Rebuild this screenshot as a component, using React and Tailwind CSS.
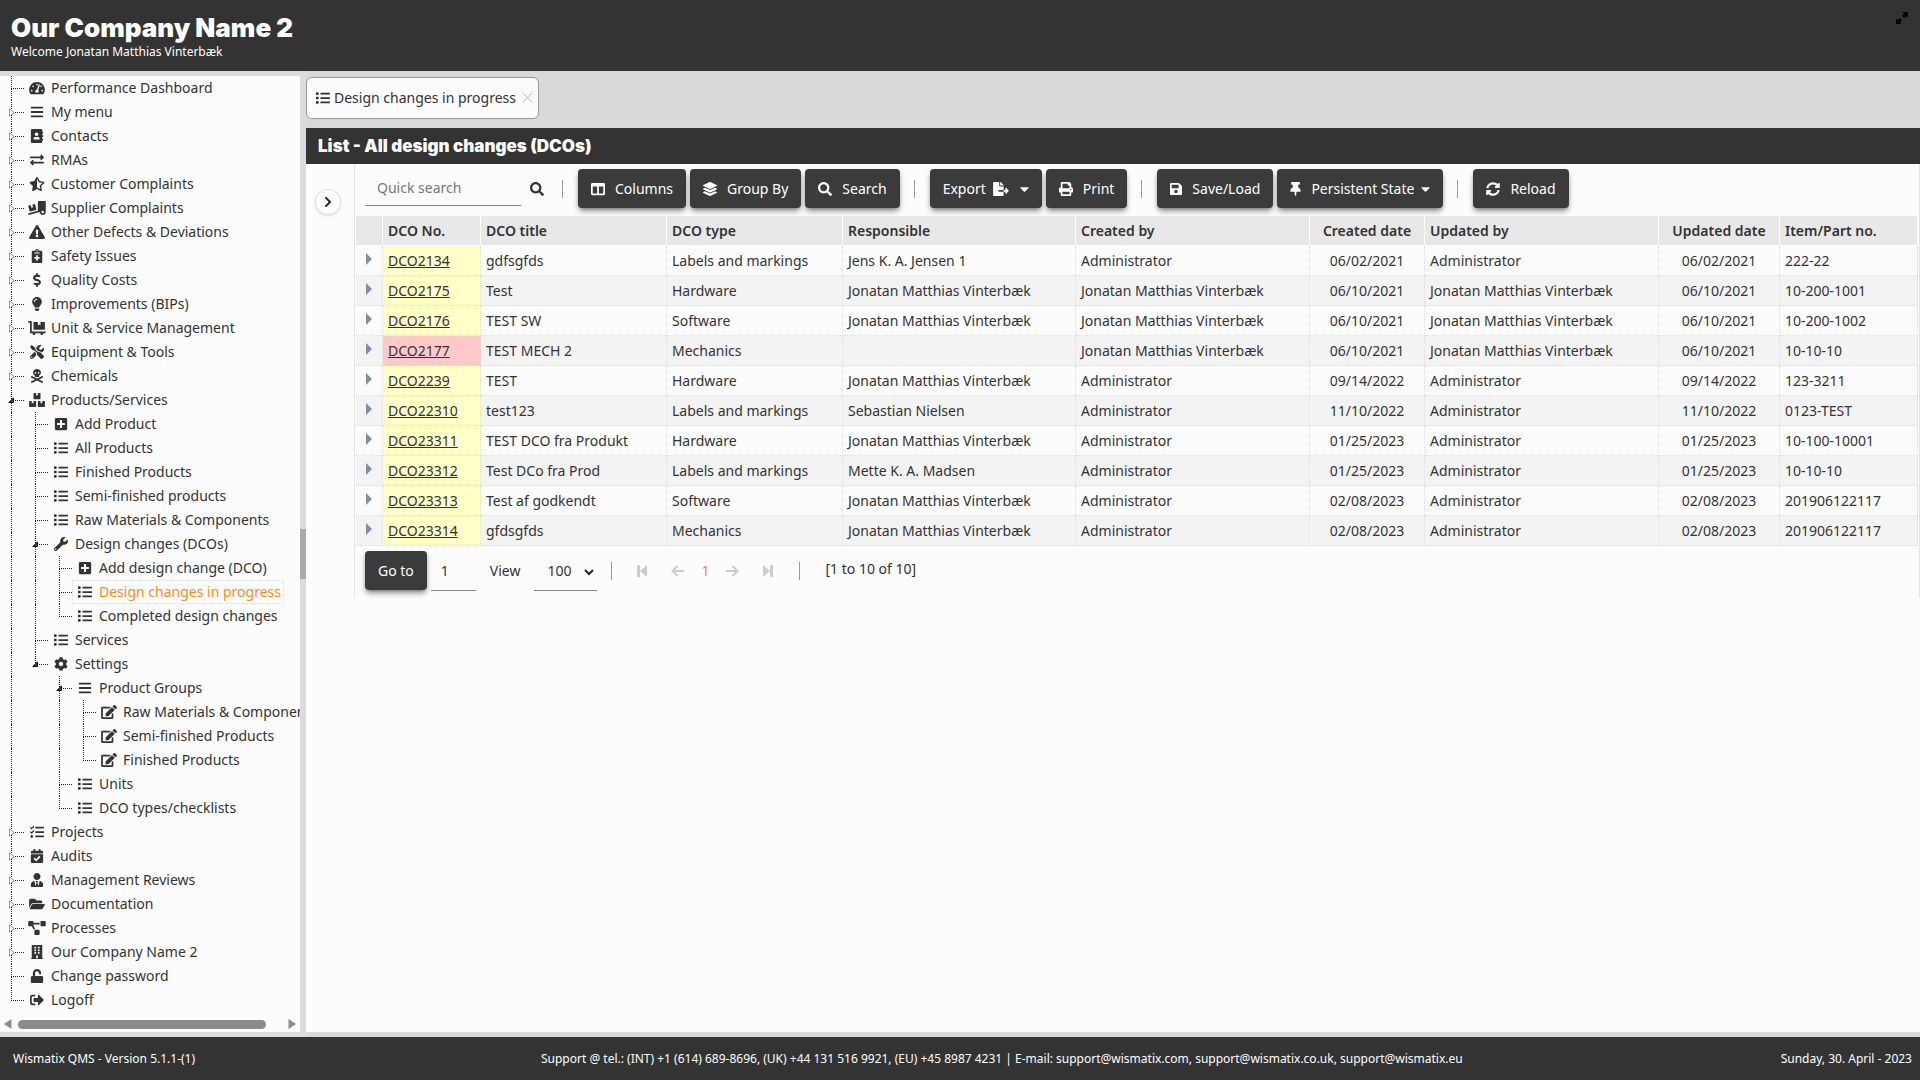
import { useState } from 'react';
import {
  FaTachometerAlt, FaBars, FaAddressBook, FaExchangeAlt, FaStarHalfAlt, FaTruckLoading,
  FaExclamationTriangle, FaNotesMedical, FaDollarSign, FaLightbulb, FaDollyFlatbed, FaTools,
  FaSkullCrossbones, FaBoxes, FaPlusSquare, FaList, FaWrench, FaCog, FaEdit, FaTasks,
  FaCalendarCheck, FaUserTie, FaFolderOpen, FaProjectDiagram, FaBuilding, FaUnlock, FaSignOutAlt,
  FaColumns, FaLayerGroup, FaSearch, FaFileExport, FaCaretDown, FaPrint, FaSave, FaThumbtack,
  FaSyncAlt, FaChevronRight,
} from 'react-icons/fa';

const menu = [
  { label: 'Performance Dashboard', icon: FaTachometerAlt },
  { label: 'My menu', icon: FaBars, closed: true },
  { label: 'Contacts', icon: FaAddressBook, closed: true },
  { label: 'RMAs', icon: FaExchangeAlt, closed: true },
  { label: 'Customer Complaints', icon: FaStarHalfAlt, closed: true },
  { label: 'Supplier Complaints', icon: FaTruckLoading, closed: true },
  { label: 'Other Defects & Deviations', icon: FaExclamationTriangle, closed: true },
  { label: 'Safety Issues', icon: FaNotesMedical, closed: true },
  { label: 'Quality Costs', icon: FaDollarSign, closed: true },
  { label: 'Improvements (BIPs)', icon: FaLightbulb, closed: true },
  { label: 'Unit & Service Management', icon: FaDollyFlatbed, closed: true },
  { label: 'Equipment & Tools', icon: FaTools, closed: true },
  { label: 'Chemicals', icon: FaSkullCrossbones, closed: true },
  {
    label: 'Products/Services',
    icon: FaBoxes,
    children: [
      { label: 'Add Product', icon: FaPlusSquare },
      { label: 'All Products', icon: FaList },
      { label: 'Finished Products', icon: FaList },
      { label: 'Semi-finished products', icon: FaList },
      { label: 'Raw Materials & Components', icon: FaList },
      {
        label: 'Design changes (DCOs)',
        icon: FaWrench,
        children: [
          { label: 'Add design change (DCO)', icon: FaPlusSquare },
          { label: 'Design changes in progress', icon: FaList },
          { label: 'Completed design changes', icon: FaList },
        ],
      },
      { label: 'Services', icon: FaList },
      {
        label: 'Settings',
        icon: FaCog,
        children: [
          {
            label: 'Product Groups',
            icon: FaBars,
            children: [
              { label: 'Raw Materials & Components', icon: FaEdit },
              { label: 'Semi-finished Products', icon: FaEdit },
              { label: 'Finished Products', icon: FaEdit },
            ],
          },
          { label: 'Units', icon: FaList },
          { label: 'DCO types/checklists', icon: FaList },
        ],
      },
    ],
  },
  { label: 'Projects', icon: FaTasks, closed: true },
  { label: 'Audits', icon: FaCalendarCheck, closed: true },
  { label: 'Management Reviews', icon: FaUserTie, closed: true },
  { label: 'Documentation', icon: FaFolderOpen, closed: true },
  { label: 'Processes', icon: FaProjectDiagram, closed: true },
  { label: 'Our Company Name 2', icon: FaBuilding, closed: true },
  { label: 'Change password', icon: FaUnlock },
  { label: 'Logoff', icon: FaSignOutAlt },
];

const JMV = 'Jonatan Matthias Vinterbæk';
const ADMIN = 'Administrator';

const rows = [
  ['DCO2134', 'gdfsgfds', 'Labels and markings', 'Jens K. A. Jensen 1', ADMIN, '06/02/2021', ADMIN, '06/02/2021', '222-22'],
  ['DCO2175', 'Test', 'Hardware', JMV, JMV, '06/10/2021', JMV, '06/10/2021', '10-200-1001'],
  ['DCO2176', 'TEST SW', 'Software', JMV, JMV, '06/10/2021', JMV, '06/10/2021', '10-200-1002'],
  ['DCO2177', 'TEST MECH 2', 'Mechanics', '', JMV, '06/10/2021', JMV, '06/10/2021', '10-10-10'],
  ['DCO2239', 'TEST', 'Hardware', JMV, ADMIN, '09/14/2022', ADMIN, '09/14/2022', '123-3211'],
  ['DCO22310', 'test123', 'Labels and markings', 'Sebastian Nielsen', ADMIN, '11/10/2022', ADMIN, '11/10/2022', '0123-TEST'],
  ['DCO23311', 'TEST DCO fra Produkt', 'Hardware', JMV, ADMIN, '01/25/2023', ADMIN, '01/25/2023', '10-100-10001'],
  ['DCO23312', 'Test DCo fra Prod', 'Labels and markings', 'Mette K. A. Madsen', ADMIN, '01/25/2023', ADMIN, '01/25/2023', '10-10-10'],
  ['DCO23313', 'Test af godkendt', 'Software', JMV, ADMIN, '02/08/2023', ADMIN, '02/08/2023', '201906122117'],
  ['DCO23314', 'gfdsgfds', 'Mechanics', JMV, ADMIN, '02/08/2023', ADMIN, '02/08/2023', '201906122117'],
];

const columns = [
  { label: 'DCO No.', width: 'w-[98px]' },
  { label: 'DCO title', width: 'w-[186px]' },
  { label: 'DCO type', width: 'w-[176px]' },
  { label: 'Responsible', width: 'w-[233px]' },
  { label: 'Created by', width: 'w-[234px]' },
  { label: 'Created date', width: 'w-[115px]', center: true },
  { label: 'Updated by', width: 'w-[234px]' },
  { label: 'Updated date', width: 'w-[121px]', center: true },
  { label: 'Item/Part no.', width: '' },
];

export default function App() {
  return (
    <div className="flex h-screen flex-col overflow-hidden bg-[#dcdcdc] font-['Noto_Sans',sans-serif] text-sm text-[#333]">
      <header className="flex h-[71px] shrink-0 items-start justify-between bg-[#333] pl-[11px] pr-3 pt-3 text-white">
        <div>
          <h1 className="font-['Inter',sans-serif] text-[26px] font-black leading-8">Our Company Name 2</h1>
          <p className="text-xs leading-4">Welcome Jonatan Matthias Vinterbæk</p>
        </div>
        <button type="button" aria-label="Full screen" className="text-black">
          <ExpandIcon />
        </button>
      </header>

      <div className="flex min-h-0 flex-1 py-[5px]">
        <Sidebar />
        <div className="flex w-1.5 shrink-0 items-center">
          <div className="h-[50px] w-full bg-[#aaa]"></div>
        </div>
        <main className="-my-[5px] flex min-w-0 flex-1 flex-col bg-[#d9d9d9] pb-[5px]">
          <div className="flex h-[57px] shrink-0 items-center pb-1">
            <div className="flex h-[42px] items-center rounded-md border border-[#999] bg-[#fcfcfc] pl-[9px] pr-[5px]">
              <Icon as={FaList} className="w-[14px]" />
              <span className="ml-1">Design changes in progress</span>
              <button type="button" aria-label="Close tab" className="ml-1.5 text-[#bbb]">
                <svg width="11" height="11" viewBox="0 0 11 11" stroke="currentColor" fill="none">
                  <path d="M1 1l9 9M10 1l-9 9" />
                </svg>
              </button>
            </div>
          </div>
          <h2 className="flex h-9 shrink-0 items-center bg-[#333] pl-3 font-['Inter',sans-serif] text-[17px] font-black text-white">
            List - All design changes (DCOs)
          </h2>
          <div className="flex min-h-0 flex-1 items-start bg-[#fcfcfc]">
            <div className="flex w-12 shrink-0 justify-center pr-1 pt-[25px]">
              <button type="button" aria-label="Show filters" className="flex size-[26px] items-center justify-center rounded-full border border-[#e2e2e6] bg-white text-[#222] shadow">
                <FaChevronRight size={12} />
              </button>
            </div>
            <section className="min-w-0 flex-1 border-x border-[#e4e4e4] pb-[7px] pl-px pr-px">
              <Toolbar />
              <DcoTable />
              <Pager />
            </section>
          </div>
        </main>
      </div>

      <footer className="flex h-[43px] shrink-0 items-center justify-between bg-[#333] pl-[13px] pr-2 text-xs text-white">
        <span className="w-[210px]">Wismatix QMS - Version 5.1.1-(1)</span>
        <span>
          Support @ tel.: (INT) +1 (614) 689-8696, (UK) +44 131 516 9921, (EU) +45 8987 4231 | E-mail: support@wismatix.com, support@wismatix.co.uk, support@wismatix.eu
        </span>
        <span>Sunday, 30. April - 2023</span>
      </footer>
    </div>
  );
}

function Sidebar() {
  return (
    <aside className="flex w-[300px] shrink-0 flex-col bg-[#fcfcfc]">
      <nav className="min-h-0 flex-1 overflow-hidden">
        <MenuLevel items={menu} guides={[]} />
      </nav>
      <div className="flex h-4 items-center gap-1.5 pl-1 pr-1 text-[#8b8b8b]">
        <svg width="8" height="10" viewBox="0 0 8 10" fill="currentColor"><path d="M7.500 0v10L0 5z" /></svg>
        <div className="flex-1">
          <div className="h-[9px] w-[94%] rounded-full bg-[#8b8b8b]"></div>
        </div>
        <svg width="8" height="10" viewBox="0 0 8 10" fill="currentColor"><path d="M.5 0v10L8 5z" /></svg>
      </div>
    </aside>
  );
}

// guides holds one flag per ancestor level: true while that level has more rows below
function MenuLevel({ items, guides }) {
  return (
    <ul>
      {items.map((item, i) => {
        const last = i === items.length - 1;
        return (
          <li key={item.label}>
            <MenuRow item={item} guides={guides} last={last} />
            {item.children && <MenuLevel items={item.children} guides={[...guides, !last]} />}
          </li>
        );
      })}
    </ul>
  );
}

function MenuRow({ item, guides, last }) {
  const active = item.label === 'Design changes in progress';
  return (
    <div className="flex h-6 pl-[11px]">
      {guides.map((on, i) => (
        <div key={i} className={`w-6 shrink-0 border-l border-dotted ${on ? 'border-[#222]' : 'border-transparent'}`}></div>
      ))}
      <div className="relative w-[13px] shrink-0">
        <div className="h-[13px] border-b border-l border-dotted border-[#222]"></div>
        {!last && <div className="h-[11px] border-l border-dotted border-[#222]"></div>}
        {item.closed && (
          <svg className="absolute -left-0.5 top-2" width="6" height="9" viewBox="0 0 6 9" fill="#fcfcfc" stroke="#999">
            <path d="M.5 .8v7.400L5 4.500z" />
          </svg>
        )}
        {item.children && (
          <svg className="absolute -left-[3px] top-[9px]" width="6" height="6" viewBox="0 0 6 6" fill="#444" stroke="#111">
            <path d="M5.500 .8v4.700H.8z" />
          </svg>
        )}
      </div>
      <a
        href="#"
        className={`flex items-center whitespace-nowrap border pr-0.5 ${active ? 'border-dotted border-[#ddd] text-[#ff8c1a]' : 'border-transparent'}`}
      >
        <span className="mr-0.5 flex w-6 shrink-0 justify-center text-[#333]">
          <Icon as={item.icon} />
        </span>
        {item.label}
      </a>
    </div>
  );
}

function Toolbar() {
  return (
    <div className="flex h-[52px] items-center pb-[3px] pl-[9px]">
      <input
        type="text"
        aria-label="Quick search"
        placeholder="Quick search"
        className="h-[34px] w-[156px] border-b border-[#888] px-3 pb-0.5 outline-none placeholder:text-[#777]"
      />
      <button type="button" aria-label="Run quick search" className="ml-[9px] mr-1">
        <Icon as={FaSearch} className="w-[14px]" />
      </button>
      <Divider />
      <div className="flex gap-1">
        <ToolButton icon={FaColumns} label="Columns" />
        <ToolButton icon={FaLayerGroup} label="Group By" />
        <ToolButton icon={FaSearch} label="Search" />
      </div>
      <Divider />
      <div className="flex gap-1">
        <button type="button" className="flex h-[39px] items-center rounded bg-[#3b3b3b] px-[13px] text-white shadow-md shadow-black/40">
          Export
          <Icon as={FaFileExport} className="ml-[7px] w-4" />
          <Icon as={FaCaretDown} className="ml-[11px] w-[9px]" />
        </button>
        <ToolButton icon={FaPrint} label="Print" />
      </div>
      <Divider />
      <div className="flex gap-1">
        <ToolButton icon={FaSave} iconWidth="w-3" label="Save/Load" />
        <ToolButton icon={FaThumbtack} iconWidth="w-[11px]" label="Persistent State" caret />
      </div>
      <Divider />
      <ToolButton icon={FaSyncAlt} label="Reload" />
    </div>
  );
}

function ToolButton({ icon, iconWidth = 'w-[14px]', label, caret }) {
  return (
    <button type="button" className="flex h-[39px] items-center rounded bg-[#3b3b3b] px-[13px] text-white shadow-md shadow-black/40">
      {icon && <span className="mr-[10px]"><Icon as={icon} className={iconWidth} /></span>}
      {label}
      {caret && <Icon as={FaCaretDown} className="ml-[7px] w-[9px]" />}
    </button>
  );
}

function Divider() {
  return <div className="ml-[14px] mr-[15px] h-[18px] w-px bg-[#999]"></div>;
}

function DcoTable() {
  return (
    <table className="w-full table-fixed border-separate border-spacing-0">
      <thead>
        <tr className="h-[30px] bg-[#e8e8e8] text-left">
          <th className="w-[27px] border-b border-r border-white" aria-label="Expand"></th>
          {columns.map((col) => (
            <th key={col.label} className={`border-b border-r border-white px-[5px] font-semibold ${col.width} ${col.center ? 'text-center' : ''}`}>
              {col.label}
            </th>
          ))}
        </tr>
      </thead>
      <tbody>
        {rows.map((row) => (
          <tr key={row[0]} className="h-[30px] even:bg-[#f3f3f3]">
            <td className="border-b border-r border-dotted border-[#ddd] pb-1">
              <button type="button" aria-label={`Expand ${row[0]}`} className="mx-auto block text-[#7d8fa8]">
                <svg width="6" height="12" viewBox="0 0 6 12" fill="currentColor"><path d="M0 0l6 6-6 6z" /></svg>
              </button>
            </td>
            {row.map((cell, i) => (
              <td
                key={i}
                className={`truncate border-b border-r border-dotted border-[#ddd] px-[5px] ${columns[i].center ? 'text-center' : ''} ${i === 0 ? (cell === 'DCO2177' ? 'bg-[#ffc9c9]' : 'bg-[#ffffc8]') : ''}`}
              >
                {i === 0 ? <a href="#" className="underline">{cell}</a> : cell}
              </td>
            ))}
          </tr>
        ))}
      </tbody>
    </table>
  );
}

function Pager() {
  const [page, setPage] = useState('1');
  return (
    <div className="flex h-[45px] items-center pl-[9px] pt-1">
      <ToolButton label="Go to" />
      <input
        type="text"
        aria-label="Page number"
        value={page}
        onChange={(e) => setPage(e.target.value)}
        className="ml-1 h-9 w-[45px] self-end border-b border-[#888] px-[10px] pb-1 outline-none"
      />
      <label htmlFor="view" className="ml-[14px]">View</label>
      <div className="relative ml-[14px] h-9 self-end">
        <select id="view" defaultValue="100" className="h-9 w-[63px] appearance-none border-b border-[#888] pb-[3px] pl-[13px] outline-none">
          <option>100</option>
          <option>50</option>
        </select>
        <svg className="pointer-events-none absolute right-[3px] top-[14px]" width="10" height="7" viewBox="0 0 10 7" fill="none" stroke="#222" strokeWidth="2">
          <path d="M1 1l4 4 4-4" />
        </svg>
      </div>
      <Divider />
      <div className="flex items-center gap-6 pl-[10px] text-[#ccc]">
        <button type="button" aria-label="First page">
          <svg width="10" height="12" viewBox="0 0 10 12" fill="currentColor"><path d="M0 0h3v12H0zM10 0v12L3 6z" /></svg>
        </button>
        <button type="button" aria-label="Previous page"><ArrowLeft /></button>
      </div>
      <span className="px-[17px] text-[#ff7f50]">1</span>
      <div className="flex items-center gap-6 pr-3 text-[#ccc]">
        <button type="button" aria-label="Next page" className="rotate-180"><ArrowLeft /></button>
        <button type="button" aria-label="Last page">
          <svg width="10" height="12" viewBox="0 0 10 12" fill="currentColor"><path d="M7 0h3v12H7zM0 0l7 6-7 6z" /></svg>
        </button>
      </div>
      <Divider />
      <span className="ml-[10px] pb-1">[1 to 10 of 10]</span>
    </div>
  );
}

function ArrowLeft() {
  return (
    <svg width="13" height="12" viewBox="0 0 13 12" fill="none" stroke="currentColor" strokeWidth="2">
      <path d="M6.500 1L1.500 6l5 5M2 6h11" />
    </svg>
  );
}

function ExpandIcon() {
  return (
    <svg width="12" height="12" viewBox="0 0 12 12" fill="currentColor">
      <path d="M6.500 0H12v5.500L10.300 4 8.300 6 6 3.700 8 1.700zM5.500 12H0V6.500L1.700 8l2-2L6 8.300l-2 2z" />
    </svg>
  );
}

// 14px glyph; the default box is wide enough for the widest ones
function Icon({ as: Glyph, className = 'w-[18px]' }) {
  return <Glyph className={`h-[14px] shrink-0 ${className}`} />;
}
